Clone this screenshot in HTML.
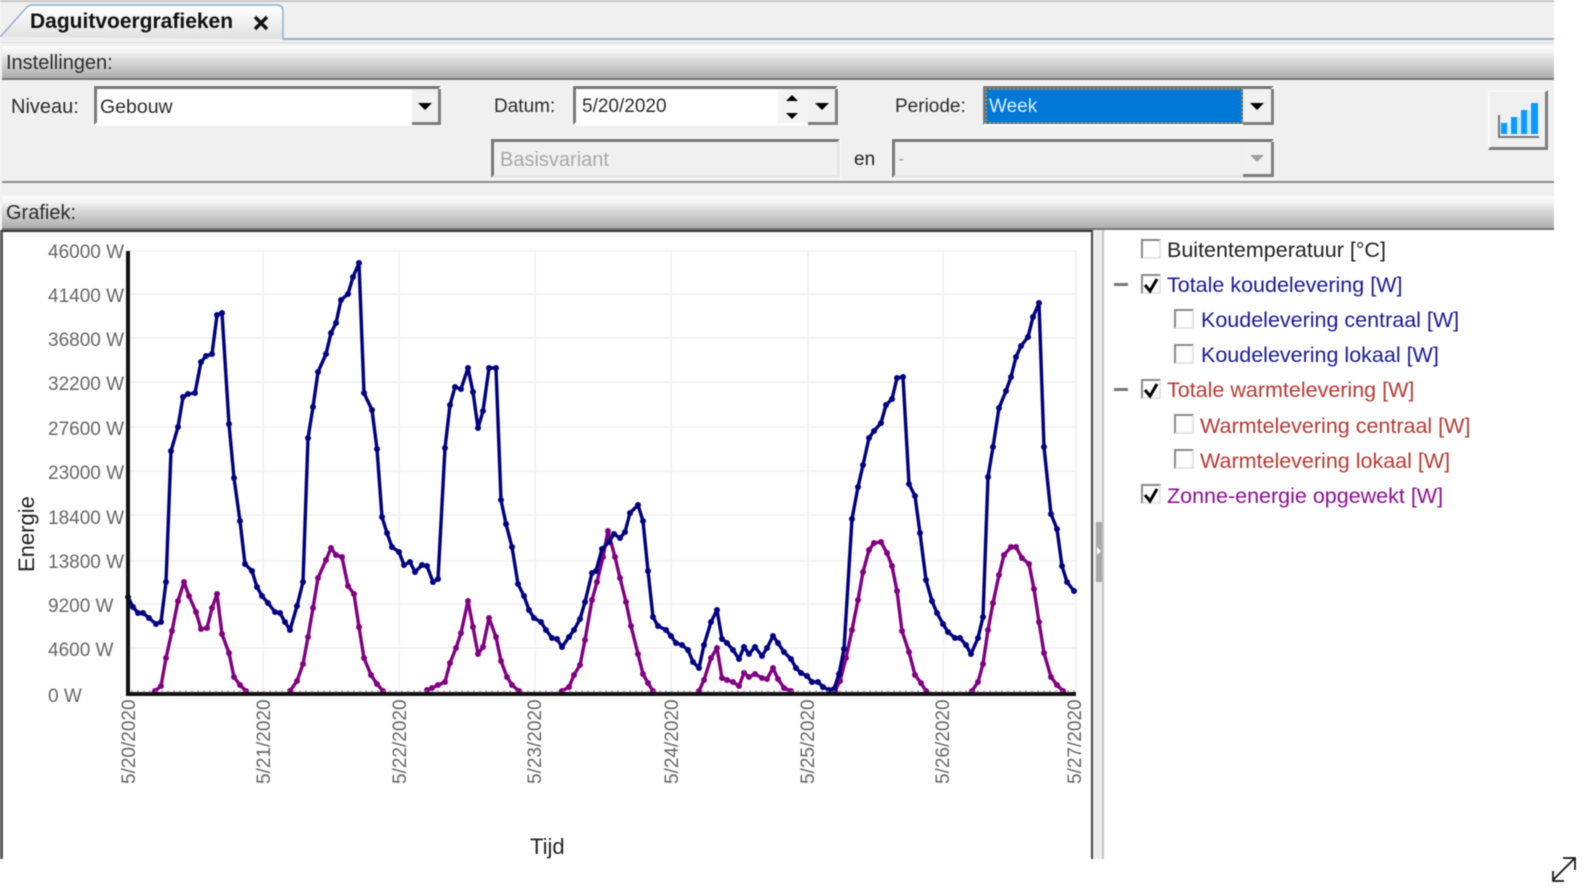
<!DOCTYPE html>
<html><head><meta charset="utf-8"><title>Daguitvoergrafieken</title>
<style>
html,body{margin:0;padding:0;background:#fff;width:1586px;height:892px;overflow:hidden}
#r{position:relative;width:1586px;height:892px;overflow:hidden;font-family:"Liberation Sans",sans-serif;filter:blur(.55px)}
#r div{position:absolute;box-sizing:border-box}
.t{white-space:nowrap;font-size:19px;line-height:24px;height:24px;color:#2c2c2c}
.h{left:2px;width:1552px;height:34px;background:linear-gradient(#fbfbfb 0,#f2f2f2 20%,#dcdcdc 42%,#aeaeae 100%);border-bottom:2px solid #777}
.box{background:#fff;border:3px solid #777;border-right-color:#fff;border-bottom-color:#fff;outline:1px solid #fbfbfb}
.dis{background:#f0f0f0;border-right-color:#e6e6e6;border-bottom-color:#e6e6e6}
.btn{background:#f1f1f1;border-right:3px solid #7d7d7d;border-bottom:3px solid #7d7d7d}
.a{width:0;height:0;border-left:7px solid transparent;border-right:7px solid transparent;border-top:7px solid #000}
.u{width:0;height:0;border-left:6px solid transparent;border-right:6px solid transparent;border-bottom:6px solid #000}
.d{width:0;height:0;border-left:6px solid transparent;border-right:6px solid transparent;border-top:6px solid #000}
.y{left:48px;color:#666}
.x{color:#666;transform-origin:0 0;transform:rotate(-90deg)}
.cb{width:20px;height:20px;background:#fff;border:2px solid #8a8a8a;border-right-color:#e4e4e4;border-bottom-color:#e4e4e4}
.l{font-size:21.5px;line-height:26px;height:26px}
.m{left:1113px;width:14px;height:3px;background:#777}
</style></head>
<body><div id="r">
<div style="left:0;top:0;width:1554px;height:859px;background:#f0f0f0"></div>
<div style="left:0;top:0;width:1554px;height:2px;background:#c6c6c6"></div>
<div style="left:283px;top:38px;width:1271px;height:2px;background:#8fb0cc"></div>
<div style="left:0;top:42px;width:1554px;height:1px;background:#dcdcdc"></div>

<svg style="position:absolute;left:0;top:0" width="290" height="42"><defs><linearGradient id="tg" x1="0" y1="0" x2="0" y2="1"><stop offset="0" stop-color="#fff"/><stop offset=".55" stop-color="#efefef"/><stop offset="1" stop-color="#e0e0e0"/></linearGradient></defs><path d="M0 37 L27 7 Q29 5 33 5 L276 5 Q283 5 283 11 L283 39" fill="url(#tg)" stroke="#8fb0cc" stroke-width="1.5"/></svg>
<div class="t" style="left:30px;top:10px;font-weight:bold;font-size:21px;color:#111">Daguitvoergrafieken</div>
<svg style="position:absolute;left:252px;top:15px" width="18" height="16"><path d="M3 2 L15 14 M15 2 L3 14" stroke="#111" stroke-width="3.4"/></svg>

<div class="h" style="top:46px"></div>
<div class="t" style="left:6px;top:51px;font-size:20px">Instellingen:</div>
<div style="left:2px;top:181px;width:1552px;height:2px;background:#8c8c8c"></div>

<div class="t" style="left:11px;top:95px;font-size:20px">Niveau:</div>
<div class="box" style="left:94px;top:86px;width:347px;height:39px"></div>
<div class="btn" style="left:412px;top:89px;width:29px;height:36px"></div>
<div class="a" style="left:418px;top:103px"></div>
<div class="t" style="left:100px;top:95px;font-size:19.5px">Gebouw</div>

<div class="t" style="left:494px;top:95px">Datum:</div>
<div class="box" style="left:573px;top:86px;width:265px;height:39px"></div>
<div style="left:778px;top:89px;width:30px;height:34px;background:#f4f4f4"></div>
<div class="u" style="left:786px;top:95px"></div>
<div class="d" style="left:786px;top:113px"></div>
<div class="btn" style="left:808px;top:89px;width:30px;height:36px"></div>
<div class="a" style="left:815px;top:103px"></div>
<div class="t" style="left:582px;top:95px">5/20/2020</div>

<div class="t" style="left:895px;top:95px">Periode:</div>
<div class="box" style="left:983px;top:86px;width:291px;height:39px"></div>
<div style="left:985px;top:88px;width:258px;height:36px;background:#0078d7;border:2px dotted #c58a3a"></div>
<div class="btn" style="left:1243px;top:89px;width:31px;height:36px"></div>
<div class="a" style="left:1250px;top:103px"></div>
<div class="t" style="left:989px;top:95px;color:#dcecfb">Week</div>

<div class="box dis" style="left:491px;top:139px;width:349px;height:39px"></div>
<div class="t" style="left:500px;top:148px;color:#a8a8a8;font-size:20px">Basisvariant</div>
<div class="t" style="left:854px;top:148px;color:#222">en</div>
<div class="box dis" style="left:892px;top:139px;width:382px;height:39px"></div>
<div class="t" style="left:898px;top:148px;color:#aaa">-</div>
<div class="btn" style="left:1243px;top:142px;width:31px;height:35px"></div>
<div class="a" style="left:1250px;top:155px;border-top-color:#a0a0a0"></div>

<div style="left:1488px;top:90px;width:60px;height:60px;background:#f0f0f0;border:2px solid #fafafa;border-right:3px solid #7d7d7d;border-bottom:3px solid #7d7d7d"></div>
<svg style="position:absolute;left:1488px;top:85px" width="70" height="70"><path d="M11 30 V52 H51" fill="none" stroke="#777" stroke-width="2"/><rect x="13" y="38" width="6" height="11" fill="#0a9bff"/><rect x="19" y="38" width="2" height="11" fill="#bfe4ff"/><rect x="23" y="32" width="6" height="17" fill="#0a9bff"/><rect x="29" y="32" width="3" height="17" fill="#bfe4ff"/><rect x="33" y="25" width="6" height="24" fill="#0a9bff"/><rect x="39" y="25" width="3" height="24" fill="#bfe4ff"/><rect x="43" y="18" width="7" height="31" fill="#0a9bff"/></svg>

<div class="h" style="top:196px"></div>
<div class="t" style="left:6px;top:201px;font-size:20px">Grafiek:</div>

<div style="left:0;top:230px;width:1093px;height:629px;background:#fff;border-top:2px solid #333;border-left:3px solid #555;border-right:2px solid #444"></div>
<div style="left:1093px;top:230px;width:11px;height:629px;background:#ececec;border-right:2px solid #c4c4c4"></div>
<div style="left:1104px;top:230px;width:450px;height:629px;background:#fff"></div>
<div style="left:1096px;top:522px;width:6px;height:60px;background:#a8a8a8"></div>
<svg style="position:absolute;left:1096px;top:545px" width="6" height="12"><path d="M1 2 L5 6 L1 10Z" fill="#fff"/></svg>

<svg style="position:absolute;left:0;top:0" width="1586" height="892">
<defs>
<marker id="mb" markerUnits="userSpaceOnUse" markerWidth="8" markerHeight="8" refX="4" refY="4"><circle cx="4" cy="4" r="3" fill="#000080"/></marker>
<marker id="mp" markerUnits="userSpaceOnUse" markerWidth="8" markerHeight="8" refX="4" refY="4"><circle cx="4" cy="4" r="3" fill="#800080"/></marker>
</defs>
<g stroke="#efefef" stroke-width="1.5" fill="none">
<path d="M128 251H1076M128 294H1076M128 338H1076M128 382H1076M128 427H1076M128 471H1076M128 515H1076M128 561H1076M128 604H1076M128 648H1076"/>
<path d="M263 251V692M399 251V692M535 251V692M671 251V692M808 251V692M943 251V692M1076 251V692"/>
</g>
<g fill="none" stroke-width="3.4" stroke-linejoin="round">
<polyline stroke="#800080" marker-start="url(#mp)" marker-mid="url(#mp)" marker-end="url(#mp)" points="155,691 161,686 166,658 172,631 178,601 184,582 189,596 196,612 201,629 207,628 212,608 217,594 222,634 229,653 234,677 240,685 246,691"/>
<polyline stroke="#800080" marker-start="url(#mp)" marker-mid="url(#mp)" marker-end="url(#mp)" points="290,691 297,681 303,664 308,637 313,608 318,578 326,560 331,548 336,555 342,557 348,586 354,594 359,627 364,658 371,675 377,684 383,691"/>
<polyline stroke="#800080" marker-start="url(#mp)" marker-mid="url(#mp)" marker-end="url(#mp)" points="427,690 432,688 438,685 445,682 450,663 456,648 461,633 468,601 473,627 478,654 483,647 489,618 496,637 501,661 507,677 512,685 519,691"/>
<polyline stroke="#800080" marker-start="url(#mp)" marker-mid="url(#mp)" marker-end="url(#mp)" points="562,691 569,687 574,675 580,665 585,640 592,600 597,582 603,557 608,531 615,557 620,578 626,602 631,626 638,654 643,674 648,683 653,691"/>
<polyline stroke="#800080" marker-start="url(#mp)" marker-mid="url(#mp)" marker-end="url(#mp)" points="699,691 704,680 711,658 717,648 722,678 727,680 733,682 739,686 744,673 749,677 755,674 762,678 767,679 773,668 778,679 784,688 791,691"/>
<polyline stroke="#800080" marker-start="url(#mp)" marker-mid="url(#mp)" marker-end="url(#mp)" points="835,691 840,681 846,658 852,630 858,600 863,572 869,550 874,543 881,542 887,553 892,566 897,591 902,631 909,652 915,675 921,683 926,691"/>
<polyline stroke="#800080" marker-start="url(#mp)" marker-mid="url(#mp)" marker-end="url(#mp)" points="972,691 978,682 983,664 988,630 993,603 999,575 1004,555 1011,547 1016,547 1022,558 1029,564 1034,589 1039,622 1044,653 1051,677 1057,685 1063,691"/>
<polyline stroke="#000080" marker-start="url(#mb)" marker-mid="url(#mb)" marker-end="url(#mb)" points="128,597 133,607 138,613 143,613 149,618 156,624 161,622 166,582 171,451 178,427 183,397 188,394 195,393 201,362 206,356 212,354 217,315 222,313 229,424 234,478 240,521 245,564 252,571 257,587 262,596 268,603 275,612 280,613 285,622 290,630 297,606 303,582 308,438 313,407 318,372 326,354 331,333 336,323 341,300 348,294 353,277 359,263 364,393 372,410 377,449 382,517 387,533 392,547 399,552 404,565 410,562 415,572 422,565 427,566 433,582 438,579 445,448 450,405 455,387 461,389 468,368 473,392 478,428 483,411 489,368 496,368 501,500 506,524 512,547 518,584 524,596 529,610 534,618 541,622 546,630 552,638 557,639 562,647 569,637 574,630 580,619 585,602 592,573 596,571 602,549 609,542 614,534 620,538 625,532 630,513 638,505 643,521 648,571 653,617 658,626 666,630 671,636 676,643 682,645 688,650 693,662 699,668 704,645 711,622 717,610 722,639 727,643 733,650 739,659 744,647 749,654 755,647 762,656 767,648 773,636 778,643 784,652 791,659 796,668 801,673 807,676 812,682 818,682 823,687 829,690 834,689 839,674 844,649 852,519 858,487 863,465 869,438 874,431 881,423 886,405 892,399 897,378 903,377 909,484 915,496 920,533 926,580 932,601 937,613 943,624 948,632 955,638 960,638 966,645 971,654 978,638 983,617 988,477 993,447 999,408 1006,391 1011,377 1016,357 1021,346 1028,337 1033,317 1039,303 1044,447 1051,514 1057,529 1062,566 1067,582 1074,591"/>
</g>
<path d="M128 251V694H1076" fill="none" stroke="#111" stroke-width="4"/>
<path d="M131 691H1076" stroke="#c070b0" stroke-width="1" stroke-dasharray="2 4" fill="none"/>
<path d="M1553 880 L1574 859 M1553 871 V881 H1564 M1563 858 H1575 V870" fill="none" stroke="#111" stroke-width="1.7"/>
</svg>

<div class="t y" style="top:241px">46000 W</div>
<div class="t y" style="top:285px">41400 W</div>
<div class="t y" style="top:329px">36800 W</div>
<div class="t y" style="top:373px">32200 W</div>
<div class="t y" style="top:418px">27600 W</div>
<div class="t y" style="top:462px">23000 W</div>
<div class="t y" style="top:507px">18400 W</div>
<div class="t y" style="top:551px">13800 W</div>
<div class="t y" style="top:595px">9200 W</div>
<div class="t y" style="top:639px">4600 W</div>
<div class="t y" style="top:685px">0 W</div>

<div class="t x" style="left:118px;top:784px">5/20/2020</div>
<div class="t x" style="left:253px;top:784px">5/21/2020</div>
<div class="t x" style="left:389px;top:784px">5/22/2020</div>
<div class="t x" style="left:524px;top:784px">5/23/2020</div>
<div class="t x" style="left:661px;top:784px">5/24/2020</div>
<div class="t x" style="left:797px;top:784px">5/25/2020</div>
<div class="t x" style="left:932px;top:784px">5/26/2020</div>
<div class="t x" style="left:1064px;top:784px">5/27/2020</div>
<div class="t" style="left:15px;top:572px;transform-origin:0 0;transform:rotate(-90deg);color:#222;font-size:22px">Energie</div>
<div class="t" style="left:530px;top:835px;color:#222;font-size:22px">Tijd</div>

<div class="cb" style="left:1141px;top:239px"></div>
<div class="t l" style="left:1167px;top:237px;color:#222">Buitentemperatuur [°C]</div>
<div class="m" style="left:1114px;top:283px"></div>
<div class="cb" style="left:1141px;top:274px"></div>
<div class="t l" style="left:1167px;top:272px;color:#1a1a96">Totale koudelevering [W]</div>
<div class="cb" style="left:1174px;top:309px"></div>
<div class="t l" style="left:1201px;top:307px;color:#1a1a96">Koudelevering centraal [W]</div>
<div class="cb" style="left:1174px;top:344px"></div>
<div class="t l" style="left:1201px;top:342px;color:#1a1a96">Koudelevering lokaal [W]</div>
<div class="m" style="left:1114px;top:388px"></div>
<div class="cb" style="left:1141px;top:379px"></div>
<div class="t l" style="left:1167px;top:377px;color:#b83a32">Totale warmtelevering [W]</div>
<div class="cb" style="left:1174px;top:414px"></div>
<div class="t l" style="left:1200px;top:413px;color:#b83a32">Warmtelevering centraal [W]</div>
<div class="cb" style="left:1174px;top:449px"></div>
<div class="t l" style="left:1200px;top:448px;color:#b83a32">Warmtelevering lokaal [W]</div>
<div class="cb" style="left:1141px;top:484px"></div>
<div class="t l" style="left:1167px;top:483px;color:#8c0f92">Zonne-energie opgewekt [W]</div>
<svg style="position:absolute;left:0;top:0" width="1586" height="892"><path d="M1145 285 L1150 291 L1157 279 M1145 390 L1150 396 L1157 384 M1145 495 L1150 501 L1157 489" fill="none" stroke="#000" stroke-width="3"/></svg>
</div></body></html>
